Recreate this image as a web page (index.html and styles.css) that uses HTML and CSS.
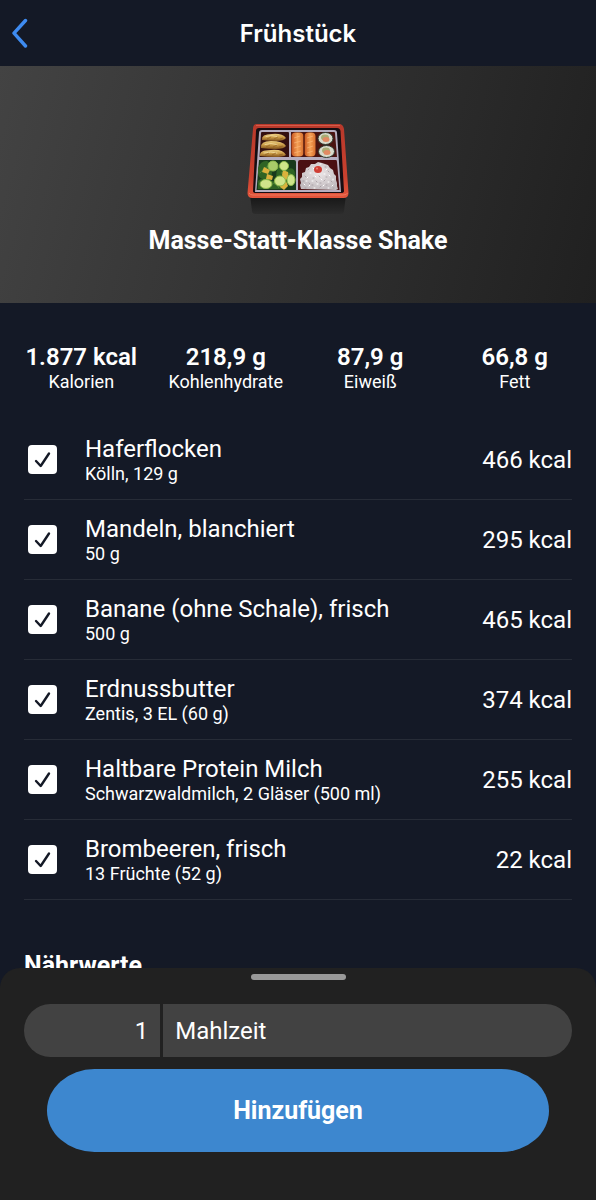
FILE: index.html
```html
<!DOCTYPE html>
<html lang="de">
<head>
    <meta charset="UTF-8">
    <meta name="viewport" content="width=device-width, initial-scale=1.0">
    <title>Frühstück</title>
    <link rel="stylesheet" href="styles.css">
</head>
<body>
    <header class="topbar">
        <a class="back" href="#" aria-label="Zurück">
            <svg width="18" height="30" viewBox="0 0 18 30" fill="none" stroke="currentColor" stroke-width="3.4" stroke-linecap="round" stroke-linejoin="round">
                <path d="M14.5 2.5 3 15.2 14.5 28"/>
            </svg>
        </a>
        <h1>Frühstück</h1>
    </header>

    <section class="hero">
        <svg class="bento" viewBox="0 0 102 92" aria-hidden="true">
            <defs>
                <linearGradient id="rim" x1="0" y1="0" x2="0" y2="1">
                    <stop offset="0" stop-color="#b8392b"/>
                    <stop offset="0.7" stop-color="#c9402e"/>
                    <stop offset="1" stop-color="#e3553c"/>
                </linearGradient>
                <linearGradient id="base" x1="0" y1="0" x2="0" y2="1">
                    <stop offset="0" stop-color="#151515"/>
                    <stop offset="1" stop-color="#2c2c2c"/>
                </linearGradient>
                <linearGradient id="salmon" x1="0" y1="0" x2="1" y2="0">
                    <stop offset="0" stop-color="#c9561f"/>
                    <stop offset="0.5" stop-color="#f5a257"/>
                    <stop offset="1" stop-color="#d8702f"/>
                </linearGradient>
                <linearGradient id="dumpling" x1="0" y1="0" x2="0" y2="1">
                    <stop offset="0" stop-color="#ecce80"/>
                    <stop offset="0.5" stop-color="#c99a45"/>
                    <stop offset="1" stop-color="#80511c"/>
                </linearGradient>
                <radialGradient id="rice" cx="0.5" cy="0.4" r="0.6">
                    <stop offset="0" stop-color="#ece7e8"/>
                    <stop offset="1" stop-color="#c2bbbf"/>
                </radialGradient>
            </defs>
            <!-- box -->
            <path fill="url(#base)" d="M3 72H99L97 88q0 3-4 3H9q-4 0-4-3z"/>
            <path fill="url(#rim)" d="M10 1H92q4 0 5 5L101.5 70q0 5-5 5H5.5q-5 0-5-5L6 6q0-5 4-5z"/>
            <path fill="none" stroke="#f0785c" d="M2 70q1 2 4 2H96q4 0 4.500-2"/>
            <path fill="none" stroke="#d65a48" d="M9 2.500H93"/>
            <path fill="#170d12" d="M12 5H90q3 0 3.500 3L97 68q0 2-3 2H9q-3 0-3-2L9 8q0-3 3-3z"/>
            <path fill="#b6aebf" d="M15 7H87q3 0 3 3L94 69H8L12 10q0-3 3-3z"/>
            <path fill="#35100f" d="M15 9H41q1 0 1 1V34H12.500L14 10q0-1 1-1z"/>
            <path fill="#4a1410" d="M44 9H87q1 0 1 1L90 34H44z"/>
            <path fill="#183a1c" d="M12 37H47q2 0 2 2V67H9.500z"/>
            <path fill="#4b1013" d="M53 37H89q1 0 1 2L92.500 67H51V39q0-2 2-2z"/>
            <!-- dumplings -->
            <g fill="url(#dumpling)">
                <path d="M15 17q-1-6 10-6 10-1 14 4-2 3-10 3-7 0-14-1z"/>
                <path d="M14 25q-1-7 10-7 12 0 15 5-2 3-10 3-8 0-15-1z"/>
                <path d="M13 33q-1-6 11-6 12-1 15 5-3 2-11 2-8 0-15-1z"/>
            </g>
            <g fill="none" stroke="#f3dfa4" stroke-linecap="round" stroke-opacity="0.8">
                <path d="M19 13.500q5-2 11 0"/>
                <path d="M18 21.500q6-2 12 0"/>
                <path d="M17 30q7-2 13 0"/>
            </g>
            <g fill="none" stroke="#8a5a20" stroke-opacity="0.6">
                <path d="M20 16l4-2M27 16l4-2M33 16l3-1"/>
                <path d="M19 24l4-2M26 24l4-2M32 24l4-1"/>
                <path d="M18 32l4-2M25 32l4-2M32 32l4-1"/>
            </g>
            <!-- salmon -->
            <rect fill="url(#salmon)" x="44.500" y="9.500" width="12" height="24" rx="4"/>
            <rect fill="url(#salmon)" x="57.500" y="9.500" width="11" height="24" rx="4"/>
            <path fill="none" stroke="#ffc48c" stroke-opacity="0.5" d="M47 15l6-2M47 20l7-2M47 25l7-2M47 30l7-2M60 15l6-2M60 20l6-2M60 25l6-2M60 30l6-2"/>
            <path fill="none" stroke="#5b1c0d" d="M57 12v20"/>
            <!-- maki -->
            <g stroke="#2e3b30" fill="#d9dacb">
                <ellipse cx="78.500" cy="15.500" rx="7.500" ry="6"/>
                <ellipse cx="79.500" cy="28.500" rx="8" ry="6"/>
            </g>
            <ellipse fill="#a8ad75" cx="78" cy="14.500" rx="4" ry="3"/>
            <ellipse fill="#e18a63" cx="79" cy="16.500" rx="3.500" ry="2.500"/>
            <ellipse fill="#a8ad75" cx="79" cy="27.500" rx="4" ry="3"/>
            <ellipse fill="#e18a63" cx="80" cy="29.500" rx="3.500" ry="2.500"/>
            <!-- salad -->
            <g fill="#2f6424">
                <path d="M11 45q3-8 9-7 6 2 3 8 5 6-2 9-8 3-10-4z"/>
                <path d="M30 45q6-5 9 2 9-5 9 5 0 8-7 9-10 0-12-7z"/>
                <path d="M11 58q8-7 14 0 8-1 10 8H11z"/>
            </g>
            <path fill="none" stroke="#5b9440" stroke-opacity="0.7" d="M13 50q4-6 9-7M34 50q5-2 10 1M26 60q4 1 6 5M14 64q3-4 7-5M41 60q4 0 5-4"/>
            <g fill="#d9b23c">
                <path d="M17 44l6 3-2 4-6-2z"/>
                <path d="M36 47l5 2 1 7-5 1-2-5z"/>
                <path d="M20 51l6 2-1 4-6-1z"/>
                <path d="M34 60l5-2 2 5-4 4-4-3z"/>
            </g>
            <g fill="#cfe58a" stroke="#8fbb4c">
                <circle fill="#a9cc69" cx="26" cy="43" r="5"/>
                <circle cx="37" cy="43" r="4.500"/>
                <ellipse cx="33" cy="58" rx="5.500" ry="5"/>
                <ellipse cx="44" cy="57" rx="4" ry="5.500"/>
                <ellipse cx="19" cy="61" rx="6" ry="4.500"/>
            </g>
            <!-- rice -->
            <path fill="url(#rice)" d="M54 66l-1-4 1-2-1-4 2-2 0-4 3-1 1-4 3-1 2-3 4 0 3-2 4 1 3 1 3 1 2 3 3 2 1 4 2 2 0 4 1 3 0 3 1 3-2 1z"/>
            <path fill="none" stroke="#fff" stroke-linecap="round" d="M57 61l1 1M60 55l1-1M63 50h1M66 45l1 1M68 53l1 1M65 58h1M62 63l1-1M70 61h1M74 56l1 1M77 51h1M76 63l1-1M81 59h1M83 53l-1-1M86 62l-1 1M80 46l-1 1M73 41h1M86 56v1M67 65h1M81 65h1M59 58h1"/>
            <path fill="none" stroke="#9b9197" stroke-opacity="0.7" stroke-linecap="round" d="M58 53l1 1M56 58h1M62 60l1 1M61 47l1-1M66 55h1M69 58l1 1M73 60h1M72 53l1 1M77 58l1-1M79 54h1M82 49l-1-1M84 58l1 1M79 62h1M73 64l1-1M65 62h1M86 65h1M58 65h1M78 44h1"/>
            <ellipse fill="#cf3e35" cx="71" cy="46.500" rx="4" ry="3.500"/>
            <circle fill="#f08272" cx="70" cy="45.500" r="1"/>
        </svg>
        <h2>Masse-Statt-Klasse Shake</h2>
    </section>

    <main>
        <dl class="macros">
            <div><dt>Kalorien</dt><dd>1.877 kcal</dd></div>
            <div><dt>Kohlenhydrate</dt><dd>218,9 g</dd></div>
            <div><dt>Eiweiß</dt><dd>87,9 g</dd></div>
            <div><dt>Fett</dt><dd>66,8 g</dd></div>
        </dl>

        <ul class="foods">
            <li>
                <label class="food">
                    <input class="check" type="checkbox" checked>
                    <span class="food-text"><span class="food-name">Haferflocken</span><span class="food-info">Kölln, 129 g</span></span>
                    <span class="food-kcal">466 kcal</span>
                </label>
            </li>
            <li>
                <label class="food">
                    <input class="check" type="checkbox" checked>
                    <span class="food-text"><span class="food-name">Mandeln, blanchiert</span><span class="food-info">50 g</span></span>
                    <span class="food-kcal">295 kcal</span>
                </label>
            </li>
            <li>
                <label class="food">
                    <input class="check" type="checkbox" checked>
                    <span class="food-text"><span class="food-name">Banane (ohne Schale), frisch</span><span class="food-info">500 g</span></span>
                    <span class="food-kcal">465 kcal</span>
                </label>
            </li>
            <li>
                <label class="food">
                    <input class="check" type="checkbox" checked>
                    <span class="food-text"><span class="food-name">Erdnussbutter</span><span class="food-info">Zentis, 3 EL (60 g)</span></span>
                    <span class="food-kcal">374 kcal</span>
                </label>
            </li>
            <li>
                <label class="food">
                    <input class="check" type="checkbox" checked>
                    <span class="food-text"><span class="food-name">Haltbare Protein Milch</span><span class="food-info">Schwarzwaldmilch, 2 Gläser (500 ml)</span></span>
                    <span class="food-kcal">255 kcal</span>
                </label>
            </li>
            <li>
                <label class="food">
                    <input class="check" type="checkbox" checked>
                    <span class="food-text"><span class="food-name">Brombeeren, frisch</span><span class="food-info">13 Früchte (52 g)</span></span>
                    <span class="food-kcal">22 kcal</span>
                </label>
            </li>
        </ul>

        <h3 class="section-title">Nährwerte</h3>
    </main>

    <form class="sheet">
        <div class="handle"></div>
        <div class="portion">
            <input class="amount" type="text" inputmode="decimal" value="1" aria-label="Menge">
            <select class="unit" aria-label="Einheit">
                <option>Mahlzeit</option>
            </select>
        </div>
        <button class="add" type="button">Hinzufügen</button>
    </form>
</body>
</html>
```
FILE: styles.css
```css
:root {
    --background: #141926;
    --foreground: #fff;
    --border: #272c37;
    --sheet: #212121;
    --field: #424242;
    --primary: #3d87cf;
    --link: #3e8bf0;
}

* {
    box-sizing: border-box;
}

body {
    margin: 0;
    background: var(--background);
    color: var(--foreground);
    font-family: Roboto, "Liberation Sans", sans-serif;
    font-size: 24px;
}

h1, h2, h3, dl, dd, ul {
    margin: 0;
    padding: 0;
}

.topbar {
    display: grid;
    grid-template-columns: 48px 1fr 48px;
    align-items: center;
    height: 66px;
}

.topbar h1 {
    font-family: Inter, sans-serif;
    font-size: 24px;
    font-weight: 600;
    text-align: center;
}

.back {
    display: flex;
    padding-left: 11px;
    color: var(--link);
}

.hero {
    display: flex;
    flex-direction: column;
    align-items: center;
    gap: 12px;
    height: 237px;
    padding-top: 57px;
    background: linear-gradient(105deg, #434343, #202020);
}

.bento {
    width: 102px;
    height: 92px;
}

.hero h2,
.section-title {
    font-size: 25px;
    font-weight: 700;
    line-height: 28px;
}

.macros {
    display: grid;
    grid-template-columns: repeat(4, 1fr);
    padding: 40px 9px 0;
    text-align: center;
}

.macros div {
    display: flex;
    flex-direction: column-reverse;
}

.macros dt {
    font-size: 18px;
    line-height: 22px;
}

.macros dd {
    font-weight: 600;
    line-height: 28px;
}

.foods {
    margin: 27px 24px 0;
    list-style: none;
}

.food {
    display: flex;
    align-items: center;
    height: 80px;
    padding-left: 4px;
    border-bottom: 1px solid var(--border);
}

.check {
    flex: none;
    width: 29px;
    height: 29px;
    margin: 0 28px 0 0;
    appearance: none;
    border-radius: 4px;
    background: #fff url("data:image/svg+xml,%3Csvg xmlns='http://www.w3.org/2000/svg' viewBox='0 0 29 29' fill='none' stroke='%23141926' stroke-width='2.4' stroke-linecap='round' stroke-linejoin='round'%3E%3Cpath d='M8 16l4.700 5L21 8.500'/%3E%3C/svg%3E") center / 29px;
}

.check:not(:checked) {
    background: none;
    border: 2px solid #fff;
}

.food-text {
    display: flex;
    flex: 1;
    flex-direction: column;
}

.food-name {
    line-height: 28px;
}

.food-info {
    font-size: 18px;
    line-height: 22px;
}

.section-title {
    margin: 52px 24px 0;
}

.sheet {
    position: fixed;
    right: 0;
    bottom: 0;
    left: 0;
    padding: 6px 24px 48px;
    border-radius: 20px 20px 0 0;
    background: var(--sheet);
}

.handle {
    width: 95px;
    height: 6px;
    margin: 0 auto 24px;
    border-radius: 3px;
    background: #999;
}

.portion {
    display: grid;
    grid-template-columns: 1fr 3fr;
    gap: 3px;
}

.amount,
.unit {
    width: 100%;
    height: 53px;
    padding: 0 12px;
    appearance: none;
    border: 0;
    background: var(--field);
    color: inherit;
    font: inherit;
}

.amount {
    border-radius: 27px 0 0 27px;
    text-align: right;
}

.unit {
    border-radius: 0 27px 27px 0;
}

.add {
    display: block;
    width: calc(100% - 46px);
    height: 83px;
    margin: 12px auto 0;
    border: 0;
    border-radius: 48px / 42px;
    background: var(--primary);
    color: inherit;
    font: inherit;
    font-size: 25px;
    font-weight: 700;
}
```
